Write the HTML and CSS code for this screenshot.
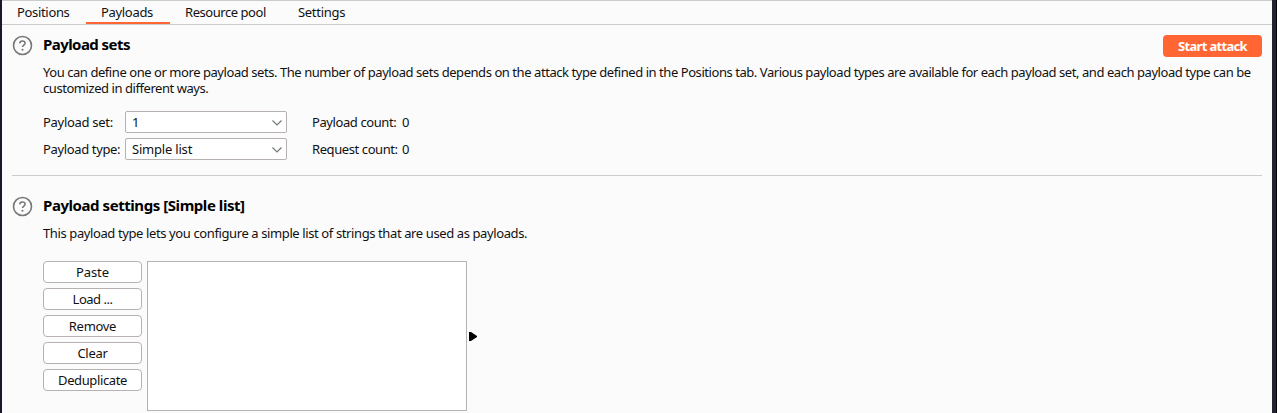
FILE: index.html
```html
<!DOCTYPE html>
<html lang="en">
<head>
<meta charset="utf-8">
<title>Payloads</title>
<link rel="stylesheet" href="styles.css">
</head>
<body>
<div class="window">
  <nav class="tabs">
    <span class="tab positions">Positions</span>
    <span class="tab payloads active">Payloads</span>
    <span class="tab resources">Resource pool</span>
    <span class="tab options">Settings</span>
  </nav>
  <main class="content">
    <section class="section sets">
      <svg class="help" viewBox="0 0 20 20"><circle cx="10.5" cy="10.5" r="9" fill="none" stroke="#777" stroke-width="1.6"/><path d="M7.7 8.4C7.8 7 8.9 6.1 10.4 6.1s2.7.9 2.7 2.2c0 1.8-2.6 1.9-2.6 3.8" fill="none" stroke="#777" stroke-width="1.5"/><circle cx="10.5" cy="14.7" r="1" fill="#777"/></svg>
      <div class="body">
        <header class="head"><h2 class="sets-title">Payload sets</h2><button class="attack">Start attack</button></header>
        <p class="desc intro">You can define one or more payload sets. The number of payload sets depends on the attack type defined in the Positions tab. Various payload types are available for each payload set, and each payload type can be<br>customized in different ways.</p>
        <div class="form">
          <span class="set-label">Payload set:</span><div class="select">1<svg class="chev" viewBox="0 0 10 6"><path d="M.5.5 5 5 9.5.5" fill="none" stroke="#777" stroke-width="1.2"/></svg></div><span class="count">Payload count:</span><span>0</span>
          <span class="type-label">Payload type:</span><div class="select simple">Simple list<svg class="chev" viewBox="0 0 10 6"><path d="M.5.5 5 5 9.5.5" fill="none" stroke="#777" stroke-width="1.2"/></svg></div><span class="count">Request count:</span><span>0</span>
        </div>
      </div>
    </section>
    <section class="section settings">
      <svg class="help" viewBox="0 0 20 20"><circle cx="10.5" cy="10.5" r="9" fill="none" stroke="#777" stroke-width="1.6"/><path d="M7.7 8.4C7.8 7 8.9 6.1 10.4 6.1s2.7.9 2.7 2.2c0 1.8-2.6 1.9-2.6 3.8" fill="none" stroke="#777" stroke-width="1.5"/><circle cx="10.5" cy="14.7" r="1" fill="#777"/></svg>
      <div class="body">
        <header class="head"><h2>Payload settings [Simple list]</h2></header>
        <p class="desc">This payload type lets you configure a simple list of strings that are used as payloads.</p>
        <div class="list-row">
          <div class="buttons"><button class="paste">Paste</button><button class="load">Load ...</button><button>Remove</button><button>Clear</button><button class="dedupe">Deduplicate</button></div>
          <div class="list"></div>
          <svg class="arrow" viewBox="0 0 8 9"><path d="M0 0h2l6 4v1L2 9H0z" fill="#000"/></svg>
        </div>
      </div>
    </section>
  </main>
</div>
</body>
</html>
```
FILE: styles.css
```css
* { box-sizing: border-box; }
body { margin: 0; width: 1277px; height: 413px; overflow: hidden; font: 13px/16px "Noto Sans", sans-serif; color: #111; background: linear-gradient(90deg, #17192a 0 2px, #22252f 2px 1276px, #050508 1276px); }
.window { height: 413px; margin: 0 5px 0 2px; background: #fbfbfb; }
.tabs { display: flex; height: 25px; border-top: 1px solid #c8cccb; border-bottom: 1px solid #c8cccb; }
.tab { padding: 3px 0 0 15px; height: 23px; white-space: nowrap; }
.positions { width: 84px; letter-spacing: -.33px; }
.payloads { width: 84px; letter-spacing: -.32px; }
.resources { width: 113px; letter-spacing: -.45px; }
.options { letter-spacing: -.3px; }
.active { border-bottom: 2px solid #ff6633; }
.content { padding: 0 10px; }
.section { display: flex; gap: 11px; }
.sets { height: 151px; padding-top: 10px; border-bottom: 1px solid #ccc; }
.settings { padding-top: 20px; }
.help { width: 20px; height: 20px; flex: none; overflow: visible; }
.body { flex: 1; min-width: 0; }
.head { display: flex; justify-content: space-between; height: 29px; }
h2 { margin: 0; font-size: 15px; line-height: 19px; letter-spacing: -.44px; color: #000; }
.sets-title { letter-spacing: -.56px; }
button { font: inherit; color: inherit; }
.attack { width: 99px; height: 22px; padding: 0; border: 0; border-radius: 4px; color: #fff; background: #ff6633; font-weight: bold; letter-spacing: -.67px; }
.desc { margin: 0; white-space: nowrap; letter-spacing: -.39px; }
.intro { letter-spacing: -.442px; }
.form { display: grid; grid-template-columns: 82px 162px 115px auto; justify-content: start; row-gap: 5px; margin-top: 15px; line-height: 22px; white-space: nowrap; }
.set-label { letter-spacing: -.3px; }
.type-label { letter-spacing: -.36px; }
.select { display: flex; justify-content: space-between; align-items: center; height: 22px; padding: 0 4px 0 6px; border: 1px solid #b7b1b1; border-radius: 2px; background: #fff; }
.simple { letter-spacing: -.2px; }
.chev { width: 10px; height: 6px; margin-top: 1px; }
.count { padding-left: 25px; letter-spacing: -.41px; }
.list-row { display: flex; margin-top: 20px; }
.buttons { display: grid; gap: 5px; width: 99px; margin-right: 5px; align-content: start; }
.buttons button { height: 22px; padding: 0; border: 1px solid #b7b1b1; border-radius: 4px; background: #fff; letter-spacing: -.3px; }
.buttons .paste { letter-spacing: -.1px; }
.buttons .load { letter-spacing: -.5px; }
.buttons .dedupe { letter-spacing: -.38px; }
.list { width: 320px; height: 150px; border: 1px solid #b7b1b1; background: #fff; }
.arrow { width: 8px; height: 9px; margin: 71px 0 0 2px; }
```
